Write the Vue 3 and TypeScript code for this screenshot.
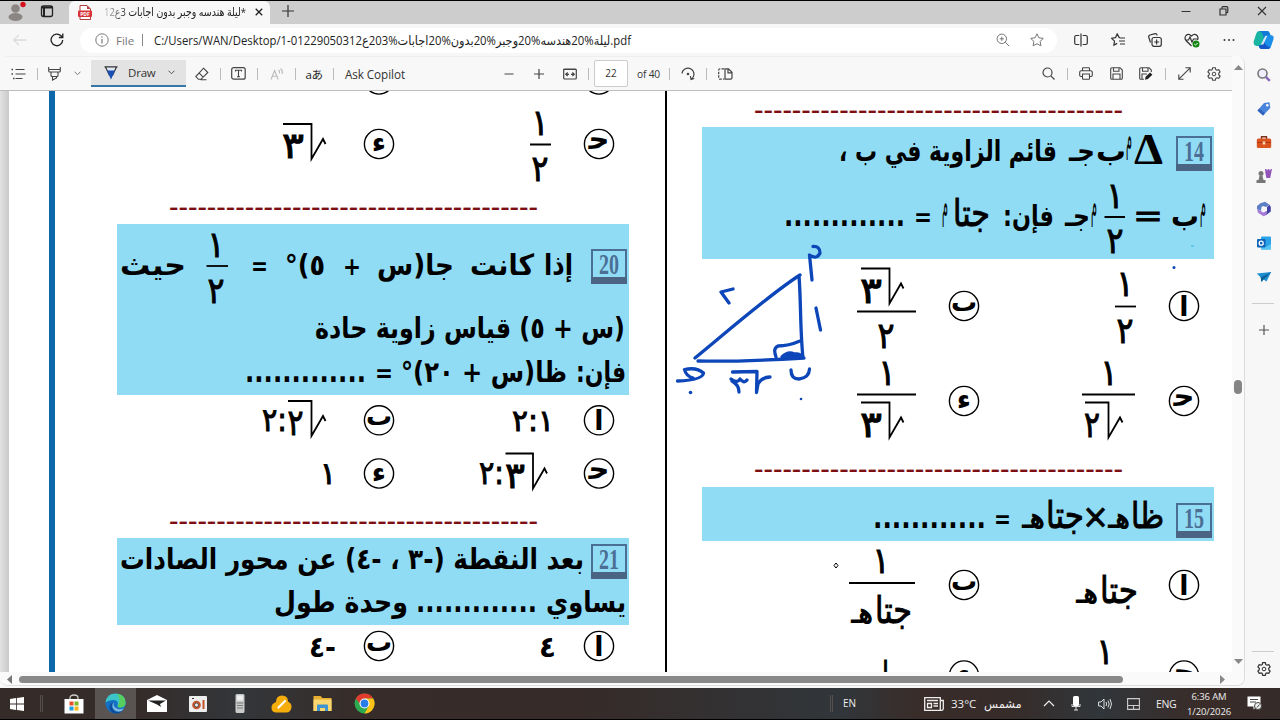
<script setup lang="ts">
interface Mark {
  kind: 'text' | 'line' | 'ring'
  text?: string
  x?: number
  y?: number
  w?: number
  size?: number
  d?: string
  cls?: string
}
interface Block {
  id: string
  x: number
  y: number
  h: number
  question?: boolean
  badge?: { n: string; y: number }
  marks: Mark[]
}

const tx = (text: string, l: number, r: number, y: number, size = 29, cls = ''): Mark => ({
  kind: 'text', text, x: (l + r) / 2, y, w: r - l, size, cls,
})
const ln = (d: string): Mark => ({ kind: 'line', d })
const bar = (l: number, r: number, y: number): Mark => ln(`M${l} ${y}H${r}`)
const root = (l: number, x: number, y: number): Mark =>
  ln(`M${l} ${y}H${x}V${y + 35}L${x + 11.5} ${y + 15}L${x + 14} ${y + 20}`)
const ring = (text: string, x: number, y: number): Mark => ({ kind: 'ring', text, x, y })
const digit = (text: string, c: number, y: number, w = 17, size = 36): Mark => tx(text, c - w / 2, c + w / 2, y, size, 'digit')
const dashes = (l: number, y: number): Mark => tx('-'.repeat(39), l - 1, l + 368, y + 7.7, 28, 'dash')
const dots = (n: number, l: number, r: number, y: number): Mark => tx('.'.repeat(n), l - 1, r + 1, y, 31, '')

const ringLabel: Record<string, { dy: number; size: number }> = {
  'ا': { dy: 10, size: 27 },
  'ٮ': { dy: 5, size: 26 },
  'ﺣ': { dy: 5, size: 29 },
  'ء': { dy: 8, size: 28 },
}

const leftBlocks: Block[] = [
  {
    id: 'l19', x: 117, y: 91, h: 133, marks: [
      ring('', 379, 79.5), ring('', 599, 79.5),
      ring('ﺣ', 599, 144), digit('١', 540, 135), bar(530, 551, 144.5), digit('٢', 540, 181),
      ring('ء', 379, 144), root(283, 311.5, 124), digit('٣', 293, 158, 22),
      dashes(170, 208),
    ],
  },
  {
    id: 'q20', x: 117, y: 224, h: 171, question: true, badge: { n: '20', y: 249 }, marks: [
      tx('إذا', 544, 573, 275), tx('كانت', 470, 534, 275), tx('جا(س', 377, 454, 275), tx('+', 343, 361, 275, 24),
      tx('٥)°', 285, 325, 275), tx('=', 251, 268, 275, 24),
      digit('١', 216, 257), bar(206.5, 228, 266), digit('٢', 216, 303),
      tx('حيث', 120, 186, 275),
      tx('(س + ٥) قياس زاوية حادة', 315, 625, 338),
      tx('فإن:', 576, 626, 382), tx('ظا(س + ٢٠)°', 401, 567, 382), tx('=', 375, 393, 382, 24),
      dots(13, 246, 365, 382),
    ],
  },
  {
    id: 'o20', x: 117, y: 395, h: 143, marks: [
      ring('ا', 599, 420.3), tx('٢:١', 512, 554, 431, 30, 'digit'),
      ring('ٮ', 379, 420.3), tx(':٢', 262, 287, 431, 32, 'digit'), root(288, 311.5, 401), digit('٢', 295.5, 435, 16),
      ring('ﺣ', 599, 473.5), tx(':٢', 479, 504, 484, 32, 'digit'), root(505.5, 533, 453.5), digit('٣', 515, 488, 20),
      ring('ء', 379, 473.5), digit('١', 328, 484, 16, 31),
      dashes(170, 522),
    ],
  },
  {
    id: 'q21', x: 117, y: 538, h: 86.5, question: true, badge: { n: '21', y: 544 }, marks: [
      tx('بعد النقطة (-٣ ، -٤) عن محور الصادات', 120, 584, 569),
      tx('يساوي', 546, 626, 612), dots(13, 417, 536, 612), tx('وحدة طول', 274, 408, 612),
    ],
  },
  {
    id: 'o21', x: 117, y: 624.5, h: 47.5, marks: [
      ring('ا', 599, 645.5), tx('٤', 539, 556, 656, 29), ring('ٮ', 379, 645.5), tx('-٤', 309, 336, 656, 29),
    ],
  },
]

const rightBlocks: Block[] = [
  { id: 'r13', x: 702, y: 91, h: 36, marks: [dashes(755, 111)] },
  {
    id: 'q14', x: 702, y: 127, h: 132, question: true, badge: { n: '14', y: 136 }, marks: [
      tx('Δ', 1134, 1163, 164, 45, 'delta'), tx('م', 1126, 1132, 151, 39, 'thin'),
      tx('ب', 1096, 1126, 160.5), tx('جـ', 1069, 1095, 160.5),
      tx('قائم الزاوية في ب ،', 839, 1057, 160.5),
      tx('م', 1200, 1206, 218, 39, 'thin'), tx('ب', 1171, 1199, 226), tx('=', 1133, 1163, 227, 32, 'wide'),
      digit('١', 1115, 208), bar(1104.5, 1125, 217), digit('٢', 1115, 253),
      tx('م', 1091, 1097, 218, 39, 'thin'), tx('جـ', 1065, 1090, 226),
      tx('فإن:', 1003, 1054, 226), tx('جتا', 953, 990, 226, 37, 'light'), tx('م', 942, 948, 218, 39, 'thin'),
      tx('=', 914, 932, 226, 24), dots(13, 785, 904, 226),
    ],
  },
  {
    id: 'o14', x: 702, y: 259, h: 228, marks: [
      ring('ا', 1184, 306), digit('١', 1125, 296), bar(1115, 1136, 306.5), digit('٢', 1125, 343),
      ring('ٮ', 964, 306), root(861, 889.5, 268.5), digit('٣', 871, 303, 22), bar(857, 916, 311.5), digit('٢', 886, 348),
      ring('ﺣ', 1184, 401), digit('١', 1109, 385), bar(1082, 1135, 394.5), root(1085, 1108.5, 402.5), digit('٢', 1092, 437, 16),
      ring('ء', 964, 401), digit('١', 887, 385), bar(857, 916, 394.5), root(861, 889.5, 402.5), digit('٣', 871, 437, 22),
      dashes(755, 470.5),
    ],
  },
  {
    id: 'q15', x: 702, y: 487, h: 54, question: true, badge: { n: '15', y: 503 }, marks: [
      tx('ظا', 1131, 1164, 528, 36, 'light'), tx('هـ', 1108, 1130, 528), tx('×', 1082, 1109, 528, 34, 'wide'),
      tx('جتا', 1046, 1084, 528, 37, 'light'), tx('هـ', 1022, 1045, 528),
      tx('=', 994, 1011, 528, 24), dots(12, 874, 985, 528),
    ],
  },
  {
    id: 'o15', x: 702, y: 541, h: 131, marks: [
      ring('ا', 1184, 585), tx('جتا', 1100, 1138, 603, 37, 'light'), tx('هـ', 1076, 1098, 603),
      ring('ٮ', 964, 585), digit('١', 881, 573), bar(849, 915, 583),
      tx('جتا', 875, 912, 623, 37, 'light'), tx('هـ', 851, 873, 623),
      ring('ﺣ', 1184, 675.5), digit('١', 1105, 664), ring('ء', 964, 675.5), tx('ا', 882, 889, 686, 34, 'light'),
      { kind: 'line', d: 'M836 563l2 2.5l-2 2.5l-2 -2.5z', cls: 'fine' },
    ],
  },
]
const columns = [
  { id: 'left', blocks: leftBlocks },
  { id: 'right', blocks: rightBlocks },
]
</script>

<template>
  <div class="screen">
    <header class="tabs">
      <div class="tabs-left">
        <svg width="69" height="24" viewBox="0 0 69 24">
          <circle cx="15.500" cy="7.500" r="4.300" fill="#8b8683" /><ellipse cx="15.500" cy="16" rx="7" ry="4" fill="#8b8683" />
          <circle cx="23" cy="3.500" r="2.700" fill="#d5121c" />
          <rect x="41.500" y="5" width="11" height="10.500" rx="2" fill="none" stroke="#222" stroke-width="1.300" /><path d="M41 6.500h12M44 6v9" stroke="#222" stroke-width="2" />
        </svg>
      </div>
      <div class="tab">
        <svg width="14" height="15" viewBox="0 0 14 15">
          <path d="M2 .5h7l3.500 3.500v10.500h-10.500z" fill="#fff" stroke="#b33c3c" /><path d="M9 .5v3.500h3.500z" fill="#b33c3c" />
          <rect y="5.500" width="14" height="6.500" rx="1" fill="#d93338" /><text x="7" y="10.800" font-size="5" font-weight="700" fill="#fff" text-anchor="middle">PDF</text>
        </svg>
        <svg class="tab-title" width="144" height="20" viewBox="0 0 144 20"><text x="72" y="13.500" direction="rtl" text-anchor="middle" textLength="142" lengthAdjust="spacingAndGlyphs">*ليلة هندسه وجبر بدون اجابات 3ع12</text></svg>
        <svg width="8" height="8" viewBox="0 0 8 8"><path d="M.7.700l6.500 6.500M7.200.700l-6.500 6.500" stroke="#222" stroke-width="1.300" /></svg>
      </div>
      <svg class="newtab" width="12" height="12" viewBox="0 0 12 12"><path d="M6 0v12M0 6h12" stroke="#333" stroke-width="1.200" /></svg>
      <div class="win">
        <svg width="10" height="10" viewBox="0 0 10 10"><path d="M.5 5.500h9" stroke="#333" /></svg>
        <svg width="10" height="10" viewBox="0 0 10 10"><path d="M1 3h6v6h-6zM3 3v-1.500q0-.8.8-.8h4q1 0 1 1v4q0 1-1 1h-1" fill="none" stroke="#333" stroke-width="1.200" /></svg>
        <svg width="10" height="10" viewBox="0 0 10 10"><path d="M1 1l8 8M9 1l-8 8" stroke="#333" stroke-width="1.100" /></svg>
      </div>
    </header>

    <nav class="nav">
      <svg width="14" height="12" viewBox="0 0 14 12"><path d="M13.500 6h-13M6 .8l-5.300 5.200l5.300 5.200" fill="none" stroke="#ccc" /></svg>
      <svg width="14" height="14" viewBox="0 0 14 14"><path d="M12.700 7a5.800 5.800 0 1 1-1.700-4.200l1.500 1.500M12.800.6v3.900h-3.900" fill="none" stroke="#222" stroke-width="1.300" /></svg>
      <div class="address">
        <svg width="14" height="14" viewBox="0 0 14 14"><circle cx="7" cy="7" r="6.200" fill="none" stroke="#777" /><path d="M7 6v4.500M7 3.300v1.300" stroke="#777" stroke-width="1.200" /></svg>
        <span class="file">File</span><i class="rule"></i>
        <svg class="url" width="480" height="20" viewBox="0 0 480 20"><text x="0" y="14.500" textLength="477" lengthAdjust="spacingAndGlyphs">C:/Users/WAN/Desktop/1-ليلة%20هندسه%20وجبر%20بدون%20اجابات%203ع01229050312.pdf</text></svg>
        <svg class="mag" width="14" height="14" viewBox="0 0 14 14"><circle cx="5.800" cy="5.800" r="4.700" fill="none" stroke="#777" /><path d="M9.200 9.200l4 4M3.700 5.800h4.200M5.800 3.700v4.200" stroke="#777" /></svg>
        <svg width="14" height="14" viewBox="0 0 14 14"><path d="M7 .8l1.900 4 4.400.6-3.200 3 .8 4.400-3.900-2.100-3.900 2.100.8-4.400-3.200-3 4.400-.6z" fill="none" stroke="#777" /></svg>
      </div>
      <div class="nav-icons">
        <svg width="14" height="14" viewBox="0 0 14 14"><path d="M5.300 2.500h-3q-1.600 0-1.600 1.500v6q0 1.500 1.600 1.500h3M8.700 2.500h3q1.600 0 1.600 1.500v6q0 1.500-1.600 1.500h-3M7 .5v13" fill="none" stroke="#333" stroke-width="1.200" /></svg>
        <svg width="14" height="14" viewBox="0 0 14 14"><path d="M9 4.600h-.8l-2-3.700-1.700 3.700-4 .6 3 2.900-.6 4 3.300-1.700M9 5h5M8 8h6M9 11h5" fill="none" stroke="#333" stroke-width="1.200" /></svg>
        <svg width="14" height="14" viewBox="0 0 14 14"><rect x="4" y="4.500" width="9.300" height="8.800" rx="2" fill="none" stroke="#333" stroke-width="1.200" /><path d="M8.600 6.500v5M6.200 9h5M2.500 9.500l-1.800-5.500q-.3-1.500 1.200-2l5.300-1.300q1.600-.2 2 1.800" fill="none" stroke="#333" stroke-width="1.200" /></svg>
        <svg width="16" height="15" viewBox="0 0 16 15"><path d="M7.500 13l-5.500-5.500q-2-2.500 0-5 2.500-2.500 5.500.5 3-3 5.500-.5 1.700 2 .5 4.500M1.500 7h3l1.500-3 2 5 1.500-3h4" fill="none" stroke="#333" stroke-width="1.200" /><circle cx="12" cy="11" r="3.500" fill="#128512" /><path d="M10.300 11l1.200 1.200 2.200-2.200" fill="none" stroke="#fff" /></svg>
        <svg width="14" height="4" viewBox="0 0 14 4"><g fill="#333"><circle cx="2.500" cy="2" r="1" /><circle cx="7" cy="2" r="1" /><circle cx="11.500" cy="2" r="1" /></g></svg>
        <svg width="22" height="20" viewBox="0 0 22 20">
          <path d="M6 1h8q2 0 2.600 2l.8 2h-3q-2 0-2.700 2l-2.500 7q-.7 2-2.800 2h-3q-3.700-1-2.600-5l2.500-7.500q.7-2.500 2.700-2.500z" fill="#19b5a2" />
          <path d="M6 1h8q2 0 2.600 2l.8 2h-3q-2 0-2.700 2l-.8 2q-1-7-4.900-8z" fill="#1479d6" />
          <path d="M17 5q4.300 0 3.500 4l-2.300 7q-1 3-3.500 3h-6q-2 0-2.600-2l-.5-1.500h1q2 0 2.700-2l2.300-7q.7-1.500 2.400-1.500z" fill="#1b8eea" />
          <path d="M9.500 13.500l1-3.500q1.500 6 7 7.500-1 1.500-2.800 1.500h-6q-2 0-2.600-2l-.5-1.500h1q2 0 2.900-2z" fill="#1557c7" />
          <path d="M12.300 6l2 0-4 8.500-2.500 0z" fill="#fff" opacity=".8" />
        </svg>
      </div>
    </nav>

    <div class="body">
      <main class="viewer">
        <div class="pdfbar">
          <svg width="15" height="12" viewBox="0 0 15 12"><path d="M4.500 1.500h9M4.500 6h10M4.500 10.500h7" stroke="#444" stroke-width="1.200" /><path d="M.5 1.500h1.500M.5 6h1.500M2 10.500h1.500" stroke="#444" stroke-width="1.600" /></svg>
          <i class="rule"></i>
          <svg width="13" height="15" viewBox="0 0 13 15"><path d="M.7 1v4q0 1 1 1h9.600q1 0 1-1v-4M3 6v3.500q0 1 1 1h5q1 0 1-1v-3.500M4.500 10.500v3.500l4-2v-1.500M1 3.500h11" fill="none" stroke="#444" stroke-width="1.100" /></svg>
          <svg width="7" height="5" viewBox="0 0 7 5"><path d="M.5.700l3 3 3-3" fill="none" stroke="#777" /></svg>
          <span></span>
          <div class="draw">
            <svg width="14" height="14" viewBox="0 0 14 14"><path d="M.5.800h13M1.500 1l4 8.500h3l4-8.500" fill="#dfe8f5" stroke="#333" stroke-width="1.200" /><path d="M3 4.500h8l-4 9z" fill="#1a4fb5" /></svg>
            <span>Draw</span>
            <svg width="7" height="5" viewBox="0 0 7 5"><path d="M.5.700l3 3 3-3" fill="none" stroke="#555" /></svg>
          </div>
          <svg width="14" height="14" viewBox="0 0 14 14"><path d="M8.500 1.200l4.300 4.300-6.800 6.800h-2.500l-2.700-2.700zM4 5.800l4.200 4.300M5.500 12.800h6" fill="none" stroke="#444" stroke-width="1.100" /></svg>
          <i class="rule"></i>
          <svg width="15" height="13" viewBox="0 0 15 13"><rect x=".7" y=".7" width="13.500" height="11.500" rx="2" fill="none" stroke="#444" stroke-width="1.200" /><path d="M4.500 4.500v-1.200h6v1.200M7.500 3.300v6.500M6 9.800h3" fill="none" stroke="#444" stroke-width="1.100" /></svg>
          <i class="rule"></i>
          <svg width="14" height="14" viewBox="0 0 14 14"><path d="M1 12.500l3.600-9 3.600 9M2.300 9.300h4.600M8.500 3q1.500 1 1 3.500M10.500 1.500q2.500 2 1.700 5.500" fill="none" stroke="#bbb" stroke-width="1.100" /></svg>
          <i class="rule"></i>
          <span class="lang">aあ</span>
          <i class="rule"></i>
          <span class="ask">Ask Copilot</span>
          <span></span>
          <svg width="10" height="10" viewBox="0 0 10 10"><path d="M.5 5h9" stroke="#444" stroke-width="1.200" /></svg>
          <svg width="10" height="10" viewBox="0 0 10 10"><path d="M0 5h10M5 0v10" stroke="#444" stroke-width="1.200" /></svg>
          <svg width="14" height="12" viewBox="0 0 14 12"><rect x=".7" y="1" width="12.600" height="10" rx="1" fill="none" stroke="#444" stroke-width="1.200" /><path d="M.7 1.500h12.600M3 6.300h3M8 6.300h3M4.700 4.500l-2 1.800 2 1.800M9.300 4.500l2 1.800-2 1.800" fill="none" stroke="#444" stroke-width="1.200" /></svg>
          <i class="rule"></i>
          <span class="pageno">22</span>
          <span class="of">of 40</span>
          <i class="rule"></i>
          <svg width="14" height="14" viewBox="0 0 14 14"><path d="M1 6.500a6 6 0 1 1 9.500 5.500M13.300 11.500l-3.300 1-.5-3.500" fill="none" stroke="#444" stroke-width="1.200" /><circle cx="7" cy="7" r="1.300" fill="#444" /></svg>
          <i class="rule"></i>
          <svg width="15" height="12" viewBox="0 0 15 12"><path d="M6 .8h-4q-1.300 0-1.300 1.200v8q0 1.200 1.300 1.200h4" fill="none" stroke="#444" stroke-width="1.200" stroke-dasharray="2.500 1.200" /><path d="M7 .8h3.500l3.500 3.500v5.500q0 1.400-1.400 1.400h-5.600zM10 .8v4h4" fill="none" stroke="#444" stroke-width="1.200" /></svg>
          <span></span>
          <svg width="13" height="13" viewBox="0 0 13 13"><circle cx="5.500" cy="5.500" r="4.500" fill="none" stroke="#444" stroke-width="1.200" /><path d="M8.800 8.800l3.700 3.700" stroke="#444" stroke-width="1.200" /></svg>
          <i class="rule"></i>
          <svg width="14" height="13" viewBox="0 0 14 13"><path d="M3.500 9.500h-1.500q-1.300 0-1.300-1.200v-3q0-1.600 1.600-1.600h9.400q1.600 0 1.600 1.600v3q0 1.200-1.300 1.200h-1.500M3.500 3.500v-2q0-.8.8-.8h5.400q.8 0 .8.800v2M3.500 7h7v4.500q0 .8-.8.800h-5.400q-.8 0-.8-.8z" fill="none" stroke="#444" stroke-width="1.100" /></svg>
          <svg width="13" height="13" viewBox="0 0 13 13"><path d="M2 .7h8l2.300 2.300v8.300q0 1-1 1h-9.600q-1 0-1-1v-9.600q0-1 1.300-1zM3.500.700v3.500h5.500v-3.500M3 12v-5h7v5" fill="none" stroke="#444" stroke-width="1.100" /></svg>
          <svg width="14" height="13" viewBox="0 0 14 13"><path d="M5 12.300h-3.300q-1 0-1-1v-9.600q0-1 1.300-1h8l2.300 2.300v2M3.500.700v3.500h5.500v-3.500M3 12v-5h5" fill="none" stroke="#444" stroke-width="1.100" /><path d="M6 12.800l.6-3 4.500-4.300 2.300 2.300-4.500 4.300z" fill="#222" /></svg>
          <i class="rule"></i>
          <svg width="13" height="13" viewBox="0 0 13 13"><path d="M.8 12.200l11.400-11.400M7.500.8h4.700v4.700M.8 7.500v4.700h4.700" fill="none" stroke="#444" stroke-width="1.100" /></svg>
          <svg width="14" height="14" viewBox="0 0 14 14"><path d="M5.700.700h2.600l.5 1.900 1.100.6 1.900-.5 1.300 2.200-1.400 1.400v1.400l1.400 1.400-1.300 2.200-1.900-.5-1.100.6-.5 1.900h-2.600l-.5-1.900-1.100-.6-1.900.5-1.300-2.200 1.400-1.400v-1.400l-1.400-1.400 1.300-2.200 1.900.5 1.100-.6z" fill="none" stroke="#444" stroke-width="1.100" /><circle cx="7" cy="7" r="1.800" fill="none" stroke="#444" /></svg>
        </div>

        <div class="page">
          <div class="margin"></div>
          <div class="edge"></div>
          <section v-for="c in columns" :key="c.id" class="column" :class="c.id">
            <svg v-for="b in c.blocks" :key="b.id" class="block" :class="{ question: b.question }" width="512" :height="b.h" :viewBox="`${b.x} ${b.y} 512 ${b.h}`">
              <g v-if="b.badge" class="badge">
                <rect :x="b.x + 475" :y="b.badge.y + 1" width="34" height="32" />
                <path :d="`M${b.x + 474} ${b.badge.y + 31.500}h36`" />
                <text :x="b.x + 492" :y="b.badge.y + 25" text-anchor="middle" textLength="20" lengthAdjust="spacingAndGlyphs">{{ b.badge.n }}</text>
              </g>
              <template v-for="(m, i) in b.marks" :key="i">
                <text v-if="m.kind === 'text'" class="ar" :class="m.cls" :x="m.x" :y="m.y" :font-size="m.size" :textLength="m.w" lengthAdjust="spacingAndGlyphs">{{ m.text }}</text>
                <path v-else-if="m.kind === 'line'" class="stroke" :class="m.cls" :d="m.d" />
                <g v-else>
                  <circle class="stroke ring" :cx="m.x" :cy="m.y" r="14.600" />
                  <text v-if="m.text" class="ar" :x="m.x" :y="(m.y ?? 0) + ringLabel[m.text].dy" :font-size="ringLabel[m.text].size">{{ m.text }}</text>
                </g>
              </template>
            </svg>
          </section>
          <svg class="ink" width="160" height="170" viewBox="672 240 160 170">
            <path d="M695 358C722 336 770 294 800 275M799 276C801 300 800 330 803 358M698 361C735 362 770 360 804 358M776 357C774 351 774 348 778 346C786 346 793 344 800 341" />
            <path d="M733 289L721 292L729 303M816 308L820.500 330M813 246.500Q820 246 820 253Q817 260 809.500 255L812 280M791 370Q791 379 799 379Q809 378 809.500 369" />
            <path d="M677.500 381Q703 380 703.500 373Q697 367 684.500 369.500Q686 376 693 378M732.500 372L757 371.500L756.500 392.500L758 384Q762 377 770 377M731 379Q737 384 740 379Q744 384 747 380M732 381Q739 385 739 392" />
            <path class="blob" d="M782 357Q788 351 794 354Q800 353 802 357z" />
            <circle class="dot" cx="690.500" cy="392.500" r="1.800" /><circle class="dot" cx="801" cy="399" r="1.300" />
          </svg>
          <svg class="speck" width="30" height="30" viewBox="1170 242 30 30"><circle cx="1174" cy="267.500" r="1.500" fill="#0c46b8" /><path d="M1191 246h3" stroke="#3bb1dc" /></svg>
        </div>
        <div class="vscroll">
          <svg width="9" height="5" viewBox="0 0 9 5"><path d="M0 5l4.500-5 4.500 5z" fill="#888" /></svg>
          <i class="vthumb"></i>
          <svg width="9" height="5" viewBox="0 0 9 5"><path d="M0 0l4.500 5 4.500-5z" fill="#888" /></svg>
        </div>
        <div class="hscroll">
          <svg width="5" height="9" viewBox="0 0 5 9"><path d="M5 0l-5 4.500 5 4.500z" fill="#777" /></svg>
          <i class="hthumb"></i>
          <svg width="5" height="9" viewBox="0 0 5 9"><path d="M0 0l5 4.500-5 4.500z" fill="#888" /></svg>
        </div>
      </main>

      <aside class="side">
        <svg width="16" height="16" viewBox="0 0 16 16"><circle cx="6.500" cy="6.500" r="4.500" fill="#eef" stroke="#777" stroke-width="1.600" /><path d="M9.800 9.800l4 4" stroke="#8a67b5" stroke-width="2.400" /></svg>
        <svg width="16" height="16" viewBox="0 0 16 16"><path d="M8 2l5.500-.7.800 5.700-7.300 7.500-5.500-5z" fill="#4b84dc" /><path d="M1.500 9.500l5.500 5 2-2-5.500-5z" fill="#2f62bd" /><circle cx="11.300" cy="4.300" r="1.300" fill="#fff" /></svg>
        <svg width="16" height="16" viewBox="0 0 16 16"><path d="M5.500 5v-2.300h5v2.300" fill="none" stroke="#7c3018" stroke-width="1.400" /><rect x=".8" y="4.500" width="14.400" height="9.500" rx="1.500" fill="#d9541e" /><path d="M1 8.500h14" stroke="#a93712" /><rect x="6.700" y="7.500" width="2.600" height="3" fill="#f6d8b0" /></svg>
        <svg width="16" height="16" viewBox="0 0 16 16"><path d="M9 1h1.500v1.200h1.200v-1.200h1.600v1.200h1.200v-1.200h1.500l-.8 4-1 5h-3.800l-1-5z" fill="#9254b8" /><circle cx="5" cy="5.500" r="2.500" fill="#777" /><path d="M3.500 8h3l1 4h2v3h-9v-3h2z" fill="#777" /></svg>
        <svg width="16" height="16" viewBox="0 0 16 16"><path d="M4.500 2.300l4.500-1.500 4.500 3-3.500 2.200-3-1-1.500 1-.5 4-4-2v-3z" fill="#5b7fc5" /><path d="M13.500 3.800l1.300 2.200v4.500l-4.500 3.500-1.300-2.500 2-1.500v-4z" fill="#4342a5" /><path d="M1 8l4 2 2 1.500 4-1.500-.5 4-3 1.200-5.500-3.500z" fill="#a57bd8" /></svg>
        <svg width="16" height="16" viewBox="0 0 16 16"><rect x="5" y="1.500" width="10" height="13" rx="1" fill="#2aa3e8" /><path d="M5 10l5 2 5-3v5.500h-10z" fill="#56c7f5" /><rect x="1" y="4" width="8.500" height="8.500" rx="1" fill="#0f65b5" /><circle cx="5.200" cy="8.200" r="2" fill="none" stroke="#fff" stroke-width="1.300" /></svg>
        <svg width="16" height="16" viewBox="0 0 16 16"><path d="M.8 4.500l14.400-1.500-4.700 9.500-3-2-2 2.500-.8-4.500z" fill="#1e8fd0" /><path d="M4.700 8.500l10.500-5.500-7.700 7.500-2 2.500z" fill="#0e5f98" /></svg>
        <i class="hr"></i>
        <svg class="add" width="10" height="10" viewBox="0 0 10 10"><path d="M5 0v10M0 5h10" stroke="#555" stroke-width="1.200" /></svg>
        <i class="hr low"></i>
        <svg class="cog" width="14" height="14" viewBox="0 0 14 14"><path d="M5.700.700h2.600l.5 1.900 1.100.6 1.900-.5 1.300 2.200-1.400 1.400v1.400l1.400 1.400-1.300 2.200-1.900-.5-1.100.6-.5 1.900h-2.600l-.5-1.900-1.100-.6-1.900.5-1.300-2.200 1.400-1.400v-1.400l-1.400-1.400 1.300-2.200 1.900.5 1.100-.6z" fill="none" stroke="#333" stroke-width="1.200" /><circle cx="7" cy="7" r="1.800" fill="none" stroke="#333" /></svg>
      </aside>
    </div>

    <footer class="taskbar">
      <div class="start"><svg width="14" height="14" viewBox="0 0 14 14"><path d="M0 2l6-.9v5.500h-6zM6.800 1l7.200-1v6.600h-7.200zM0 7.400h6v5.500l-6-.9zM6.800 7.400h7.200v6.600l-7.200-1z" fill="#fff" /></svg></div>
      <i class="tsep"></i>
      <div class="apps">
        <span class="app"><svg width="20" height="20" viewBox="0 0 20 20"><path d="M6 6v-2q0-3 4-3t4 3v2" fill="none" stroke="#ccc" stroke-width="1.300" /><rect x=".5" y="5" width="19" height="14.500" fill="#fff" /><path d="M5.500 7.500h4v4h-4z" fill="#e8502a" /><path d="M10.500 7.500h4v4h-4z" fill="#7db928" /><path d="M5.500 12.500h4v4h-4z" fill="#1c9ee0" /><path d="M10.500 12.500h4v4h-4z" fill="#f5b51b" /></svg></span>
        <span class="app on"><svg width="21" height="21" viewBox="0 0 21 21"><circle cx="10.500" cy="10.500" r="10" fill="#1370c4" /><path d="M.6 9.500q1-9 10-9 9.500.5 10 9 0 5-5.500 5-3 0-2.500-2 1.500-5-4-5.500-5-.2-8 2.500z" fill="#3cc5c9" /><path d="M12 .7q8 1.300 8.500 8.800 0 5-5.500 5-2.500 0-2.500-1.500 4.500-5.300-.5-12.300z" fill="#57cf5e" /><path d="M9 9q-5 4 0 8.500 4 3.500 9 0-3 3.500-7.500 3-5-.7-6-5.500-.5-4.500 4.500-6z" fill="#0d4a98" /><path d="M9 9q-2 5 4 7 3 .7 6-.8-1.500 3-5 3.300-5 0-6.500-4.500-.5-3.500 1.500-5z" fill="#dff3fa" opacity=".55" /></svg></span>
        <span class="app"><svg width="20" height="18" viewBox="0 0 20 18"><path d="M0 5l10-5 10 5v12h-20z" fill="#fff" /><path d="M1 5.500h18l-6 3.500 1 3-4-2.500z" fill="#222" /></svg></span>
        <span class="app"><svg width="18" height="16" viewBox="0 0 18 16"><rect width="18" height="16" rx="1" fill="#eee" /><circle cx="7.500" cy="9" r="4.300" fill="#c4522b" /><circle cx="7.500" cy="9" r="2" fill="#eee" stroke="#555" /><path d="M14.500 4v9" stroke="#c4522b" stroke-width="2" /><path d="M3 2.500h2" stroke="#333" /></svg></span>
        <span class="app"><svg width="10" height="19" viewBox="0 0 10 19"><rect x=".5" width="9" height="19" rx="1.500" fill="#c9cbcb" /><rect x="2" y="1.500" width="6" height="5" fill="#eee" /><path d="M1.500 9h7M2 11.500h6M2 14h6" stroke="#777" stroke-width="1.200" /></svg></span>
        <span class="app"><svg width="21" height="18" viewBox="0 0 21 18"><path d="M5 7q0-6.500 6-6.500t6 6q4 2 3.500 6-1 5-5 5h-11q-4-.5-4-5 0-4 4.500-5.500z" fill="#f5ad0c" /><path d="M7.500 12.500l6.500-6.500" stroke="#fff" stroke-width="2.200" stroke-linecap="round" /></svg></span>
        <span class="app"><svg width="19" height="17" viewBox="0 0 19 17"><path d="M.5 1h7l2 2h9v13h-18z" fill="#e9ad31" /><path d="M.5 4.500h18v11.500h-18z" fill="#fbd771" /><path d="M4 16v-5.500q0-1 1-1h9q1 0 1 1v5.500h-3v-3h-5v3z" fill="#3f94d1" /></svg></span>
        <span class="app"><svg width="21" height="21" viewBox="0 0 21 21"><circle cx="10.500" cy="10.500" r="10" fill="#2da94f" /><path d="M1.800 5.500a10 10 0 0 1 17.400 0h-8.700l-4 6z" fill="#e23b2e" /><path d="M19.200 5.500a10 10 0 0 1-8.700 15l4.500-8-4.500-7z" fill="#fbc116" /><circle cx="10.500" cy="10.500" r="5" fill="#fff" /><circle cx="10.500" cy="10.500" r="3.900" fill="#2a7de8" /></svg></span>
      </div>
      <i class="tsep far"></i>
      <span class="en">EN</span>
      <div class="weather">
        <svg width="20" height="14" viewBox="0 0 20 14"><path d="M.7.700h15.600v12.600h-15.600zM16.300 3.500h3v8q0 1.800-1.500 1.800h-2" fill="none" stroke="#eee" stroke-width="1.300" /><path d="M3 3.500h11M9.500 6.500h4.500M9.500 9h4.500M3.500 6.500h4v4h-4z" fill="none" stroke="#eee" stroke-width="1.300" /></svg>
        <span>33°C</span><span class="sunny">مشمس</span>
      </div>
      <div class="tray">
        <svg width="12" height="7" viewBox="0 0 12 7"><path d="M1 6l5-5 5 5" fill="none" stroke="#eee" stroke-width="1.200" /></svg>
        <svg width="10" height="15" viewBox="0 0 10 15"><rect x="2" y="0" width="6" height="10" rx="1.500" fill="#fff" /><path d="M1 8v2.500h8v-2.500M5 11v3M3 14h4" fill="none" stroke="#ddd" /></svg>
        <svg width="14" height="12" viewBox="0 0 14 12"><path d="M.6 4h2.400l3-3v10l-3-3h-2.400zM8 4q1.300 2 0 4M10 2.500q2.300 3.500 0 7M12 1q3 5 0 10" fill="none" stroke="#ddd" /></svg>
        <svg width="13" height="12" viewBox="0 0 13 12"><path d="M.6.600h11.800v10.800h-11.800zM.6 7.500h11.800M6.500 7.500v4" fill="none" stroke="#ccc" stroke-width="1.100" /></svg>
        <span class="eng">ENG</span>
      </div>
      <div class="clock"><span>6:36 AM</span><span>1/20/2026</span></div>
      <svg class="note" width="15" height="15" viewBox="0 0 15 15"><path d="M.5.500h13v10h-4l-3 3v-3h-6z" fill="#fff" /><path d="M3 3.500h8M3 6h6" stroke="#444" /><circle cx="11" cy="10" r="3.500" fill="#eee" stroke="#444" /><path d="M10 11.500l2.500-3" stroke="#444" /></svg>
    </footer>
  </div>
</template>

<style>
html, body { margin: 0; overflow: hidden; }
</style>

<style scoped>
.screen { width: 1280px; height: 720px; box-sizing: border-box; border-top: 1px solid #000; background: #f7f7f7; display: flex; flex-direction: column; font-family: "Open Sans", "Noto Sans", "DejaVu Sans", sans-serif; color: #333; overflow: hidden; }
svg { display: block; flex: none; }
.tabs { height: 23px; background: #cdcdcd; display: flex; align-items: center; flex: none; }
.tabs-left { width: 69px; height: 24px; flex: none; }
.tab { width: 201px; height: 23px; box-sizing: border-box; padding: 0 13px 1px 9px; background: #f7f7f7; border-radius: 6px 6px 0 0; display: flex; align-items: center; }
.tab-title { margin: 0 8px 0 11px; font-size: 11.5px; fill: #222; -webkit-mask-image: linear-gradient(90deg, rgba(0, 0, 0, .2), #000 24px); }
.newtab { margin-left: 12px; margin-top: -3px; }
.win { margin-left: auto; display: flex; gap: 28px; padding-right: 13px; margin-top: -3px; }
.nav { height: 32px; display: flex; align-items: center; flex: none; padding-left: 13px; }
.nav > svg + svg { margin-left: 23px; }
.address { width: 977px; height: 25px; box-sizing: border-box; margin-left: 16px; padding: 0 13px 0 15px; background: #fff; border-radius: 13px; display: flex; align-items: center; flex: none; }
.rule { width: 1px; height: 12px; background: #bbb; display: block; }
.file { margin-left: 7px; font-size: 11.5px; color: #777; width: 19px; }
.address .rule { margin: 0 11px 0 7px; background: #888; }
.url { font-size: 12.5px; fill: #222; }
.mag { margin-left: auto; margin-right: 20px; }
.nav-icons { display: flex; align-items: center; gap: 23px; margin-left: 17px; }
.nav-icons svg:nth-child(4) { margin: 0 -1px; }
.nav-icons svg:last-child { margin-left: -6px; }
.body { height: 631px; display: flex; flex: none; }
.viewer { width: 1245px; height: 630px; box-sizing: border-box; display: grid; grid-template-columns: 1232px 12px; grid-template-rows: 35px 581px 14px; border-right: 1px solid #ddd; border-bottom: 1px solid #ddd; border-radius: 8px; overflow: hidden; background: #fafafa; }
.pdfbar { box-sizing: border-box; border-bottom: 1px solid #bdbdbd; border-top: 1px solid #eee; background: #f8f8f8; display: grid; align-items: center; justify-items: center; grid-template-columns: 36px 2px 32px 14px 7px 95px 32px 4px 32px 6px 33px 4px 34px 4px 80px 79px 30px 30px 32px 4px 42px 33px 8px 30px 6px 32px 292px 30px 8px 30px 30px 30px 8px 30px 30px; font-size: 11.5px; }
.draw { width: 95px; height: 27px; box-sizing: border-box; border-bottom: 2px solid #3578a8; background: #e3e3e3; display: flex; align-items: center; padding: 0 11px 0 13px; gap: 10px; }
.draw span { width: 27px; font-size: 11.5px; letter-spacing: -.2px; }
.draw svg:last-child { margin-left: 3px; }
.lang { font-family: "Open Sans", "Noto Sans CJK JP", sans-serif; font-size: 11.5px; letter-spacing: -.5px; white-space: nowrap; color: #222; }
.ask { font-size: 11.7px; white-space: nowrap; letter-spacing: -.05px; }
.pageno { width: 32px; height: 25px; border: 1px solid #ccc; background: #fff; border-radius: 2px; line-height: 25px; text-align: center; font-size: 10px; }
.of { font-size: 10.2px; letter-spacing: -.2px; white-space: nowrap; }
.page { position: relative; background: #fff; display: flex; overflow: hidden; }
.margin { width: 9px; background: linear-gradient(90deg, #e2e2e2, #c9c9c9); flex: none; }
.edge { width: 6px; margin-left: 40px; background: #0d68ab; flex: none; }
.column { display: flex; flex-direction: column; box-sizing: border-box; flex: none; }
.left { width: 612px; padding-left: 62px; border-right: 2px solid #000; }
.right { padding-left: 35px; }
.block { overflow: visible; }
.question { background: #91dcf5; }
.badge rect { fill: none; stroke: #4b6f94; stroke-width: 2; }
.badge path { stroke: #4b6484; stroke-width: 7; }
.badge text { fill: #4b6f94; font: 700 29px "Liberation Serif", serif; }
.ar { font-family: "DejaVu Sans", sans-serif; font-weight: 700; direction: rtl; text-anchor: middle; fill: #000; white-space: pre; }
.thin, .light, .digit, .wide { font-weight: 400; }
.light { stroke: #000; stroke-width: .9; }
.digit { stroke: #000; stroke-width: 1; }
.wide { stroke: #000; stroke-width: .9; }
.dash { font-family: "Liberation Sans", sans-serif; font-weight: 400; fill: #7c0e12; stroke: #7c0e12; stroke-width: .2; }
.delta { font-family: "Liberation Serif", serif; }
.stroke { fill: none; stroke: #000; stroke-width: 1.8; }
.ring { stroke-width: 1.4; }
.fine { stroke-width: 1; }
.ink { position: absolute; left: 672px; top: 149px; fill: none; stroke: #0c46b8; stroke-width: 3.3; stroke-linecap: round; stroke-linejoin: round; }
.blob { fill: #0c46b8; }
.dot { fill: #0c46b8; stroke: none; }
.speck { position: absolute; left: 1170px; top: 151px; }
.vscroll { grid-column: 2; grid-row: 1 / 3; display: flex; flex-direction: column; align-items: center; padding: 9px 0 8px; background: #fafafa; }
.vthumb { width: 8px; height: 14px; border-radius: 4px; background: #858585; margin: 310px 0 auto; }
.hscroll { grid-column: 1 / 3; display: flex; align-items: center; padding-left: 7px; background: #fafafa; }
.hthumb { width: 1104px; height: 7px; border-radius: 4px; background: #898989; margin: 0 97px 0 7px; }
.side { width: 35px; display: flex; flex-direction: column; align-items: center; padding-top: 11px; box-sizing: border-box; height: 631px; }
.side svg { margin-bottom: 17.600px; margin-left: 2px; }
.hr { width: 22px; height: 1px; background: #ccc; margin-top: 1px; }
.side .add { margin: 21px 0 0 2px; }
.low { margin-top: auto; }
.side .cog { margin: 10px 0 11px 2px; }
.taskbar { height: 32px; margin-top: 1px; box-sizing: border-box; border-bottom: 1px solid #000; background: linear-gradient(90deg, #352b29 0, #352b29 130px, #33363a 240px, #372c29 360px, #362b29 580px, #31363a 840px, #392c29 920px, #362c2a 1010px, #31363a 1100px, #392c29 1200px, #352b29); display: flex; align-items: center; flex: none; color: #eee; }
.start { width: 31px; padding-left: 10px; box-sizing: border-box; }
.tsep { width: 1px; height: 17px; border: 1px solid #574f4d; border-width: 0 1px; margin-left: 9px; }
.apps { display: flex; margin-left: 10px; }
.app { width: 41.500px; height: 31px; display: flex; align-items: center; justify-content: center; }
.on { background: #595452; }
.far { margin-left: 445px; }
.en { margin-left: 10px; font-size: 10px; width: 17px; margin-top: -2px; }
.weather { margin-left: 64px; display: flex; align-items: center; font-size: 11.500px; white-space: nowrap; }
.weather span { margin-left: 7px; width: 26px; }
.weather .sunny { width: 37px; font-size: 11.5px; }
.tray { display: flex; align-items: center; margin-left: 22px; font-size: 10.500px; }
.tray svg:nth-child(2) { margin-left: 16px; }
.tray svg:nth-child(3) { margin-left: 17px; }
.tray svg:nth-child(4) { margin-left: 15px; }
.eng { margin-left: 16px; width: 20px; letter-spacing: -.4px; }
.clock { display: flex; flex-direction: column; align-items: center; width: 48px; margin-left: 9px; font-size: 9.500px; line-height: 15px; white-space: nowrap; letter-spacing: -.1px; }
.note { margin-left: 14px; }
</style>
